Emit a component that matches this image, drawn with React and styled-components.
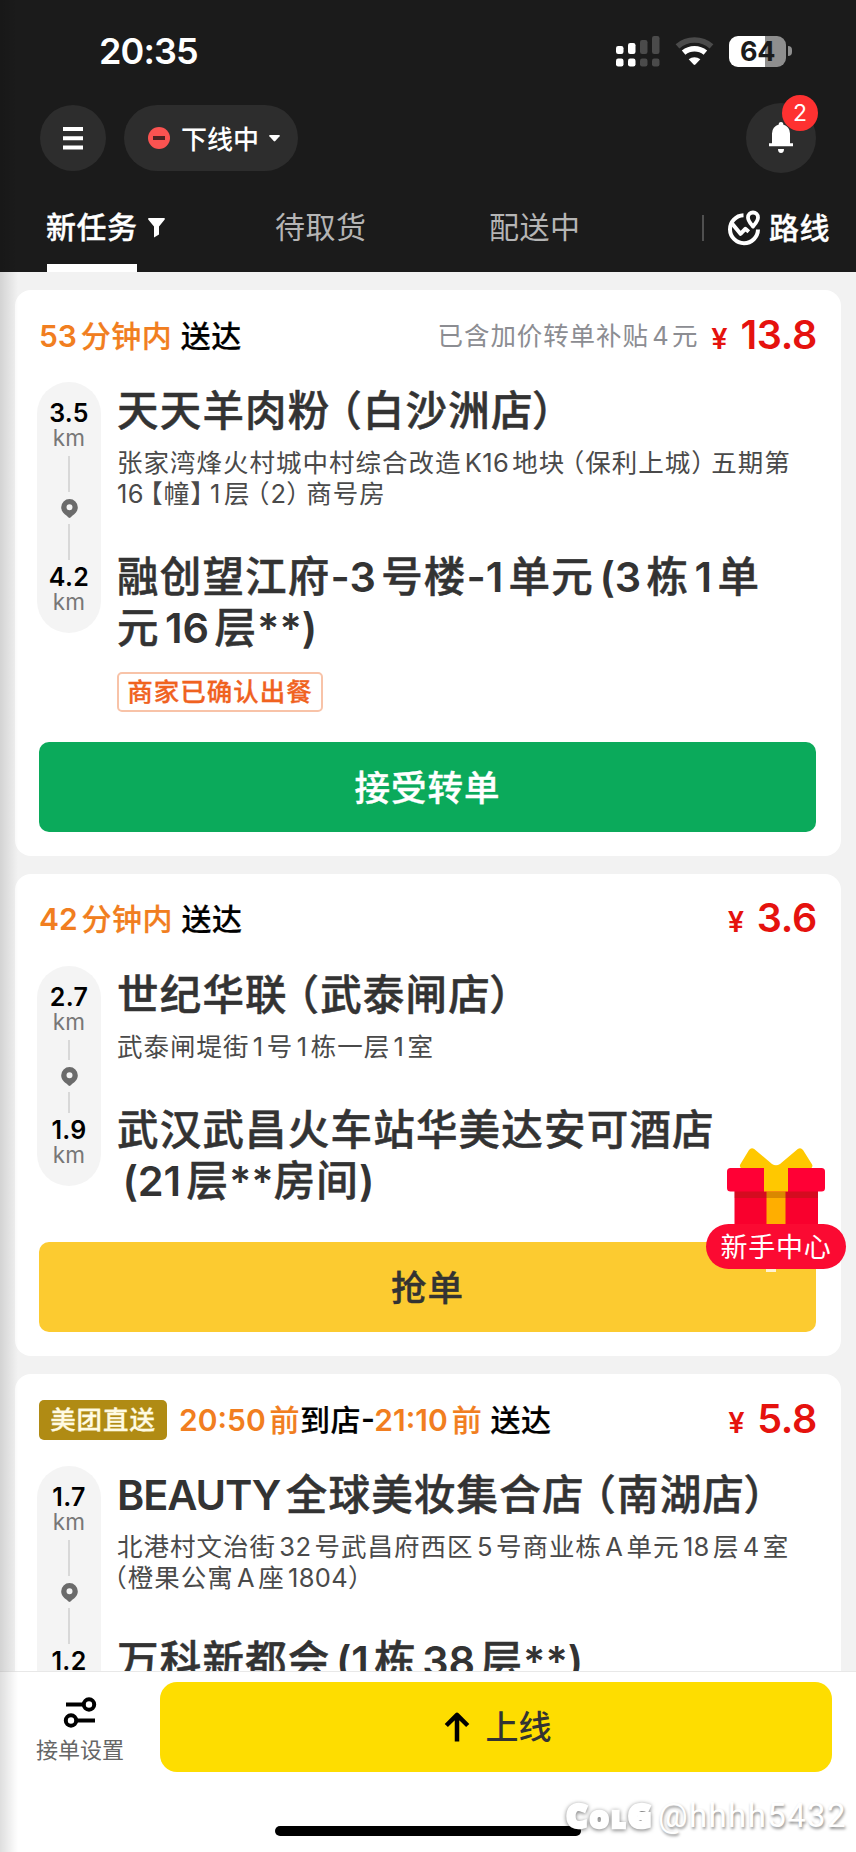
import styled, { createGlobalStyle, css } from "styled-components"

const GlobalStyle = createGlobalStyle`
    * { box-sizing: border-box; }
    body {
        margin: 0;
        background: #f2f2f2;
        font-family: Inter, "Noto Sans CJK SC", sans-serif;
    }
    p, h2, h3 { margin: 0; font-weight: inherit; }
    button { border: 0; padding: 0; font-family: inherit; }
    svg { display: block; flex: none; }
`

const orders = [
    {
        id: 1,
        time: [["53分钟内", true], [" 送达", false]],
        subsidy: "已含加价转单补贴4元",
        price: "13.8",
        toShop: "3.5",
        toUser: "4.2",
        railHeight: 251,
        shop: "天天羊肉粉（白沙洲店）",
        address: ["张家湾烽火村城中村综合改造K16地块（保利上城）五期第", "16【幢】1层（2）商号房"],
        target: ["融创望江府-3号楼-1单元(3栋1单", "元16层**)"],
        tag: "商家已确认出餐",
        action: "接受转单",
        kind: "transfer",
    },
    {
        id: 2,
        time: [["42分钟内", true], [" 送达", false]],
        price: "3.6",
        toShop: "2.7",
        toUser: "1.9",
        railHeight: 220,
        shop: "世纪华联（武泰闸店）",
        address: ["武泰闸堤街1号1栋一层1室"],
        target: ["武汉武昌火车站华美达安可酒店", "(21层**房间)"],
        action: "抢单",
        kind: "grab",
    },
    {
        id: 3,
        badge: "美团直送",
        time: [["20:50前", true], ["到店-", false], ["21:10前", true], [" 送达", false]],
        price: "5.8",
        toShop: "1.7",
        toUser: "1.2",
        railHeight: 251,
        shop: "BEAUTY全球美妆集合店（南湖店）",
        address: ["北港村文治街32号武昌府西区5号商业栋A单元18层4室", "（橙果公寓A座1804）"],
        target: ["万科新都会(1栋38层**)"],
        action: "抢单",
        kind: "grab",
    },
]

const isHan = (ch) => /[\u4e00-\u9fff]/.test(ch || "")

// latin runs get a little air next to chinese characters
function Mixed({ text }) {
    const parts = text.split(/([!-~]+|[（【]|[）】])/)
    return parts.map((part, i) => {
        if (i % 2 === 0) return part
        if (/[（【]/.test(part)) return <OpenParen key={i} $start={i === 1 && !parts[0]}>{part}</OpenParen>
        if (/[）】]/.test(part)) return <CloseParen key={i}>{part}</CloseParen>
        const before = part[0] === "(" || (/^\w/.test(part) && isHan(parts[i - 1].slice(-1)))
        const after = /\w$/.test(part) && isHan(parts[i + 1][0])
        return <Latin key={i} $before={before} $after={after} $caps={part.length > 4 && /^[A-Z]+$/.test(part)}>{part}</Latin>
    })
}

function Rail({ from, to, height }) {
    return (
        <RailBox $height={height}>
            <Distance>{from}</Distance>
            <Unit>km</Unit>
            <RailLine $above />
            <svg width="17" height="19" viewBox="0 0 17 19">
                <path fillRule="evenodd" fill="#6b6b6b" d="M8.5 0a8.3 8.3 0 0 1 8.3 8.3c0 4-2.600 6.600-5.500 8.500l-1.800 1.700a1.500 1.500 0 0 1-2 0L5.700 16.800C2.800 14.900.2 12.300.2 8.300A8.300 8.300 0 0 1 8.500 0Zm0 5.200a3 3 0 1 0 0 6 3 3 0 0 0 0-6Z" />
            </svg>
            <RailLine />
            <Distance $last>{to}</Distance>
            <Unit>km</Unit>
        </RailBox>
    )
}

function OrderCard({ order }) {
    return (
        <Card>
            <CardHeader>
                {order.badge && <Badge>{order.badge}</Badge>}
                <Time>
                    {order.time.map(([text, hot], i) => (
                        <TimePart key={i} $hot={hot}><Mixed text={text} /></TimePart>
                    ))}
                </Time>
                {order.subsidy && <Subsidy><Mixed text={order.subsidy} /></Subsidy>}
                <Price><Yen>¥</Yen>{order.price}</Price>
            </CardHeader>
            <CardBody>
                <Rail from={order.toShop} to={order.toUser} height={order.railHeight} />
                <Places>
                    <PlaceName><Mixed text={order.shop} /></PlaceName>
                    <Address>
                        {order.address.map((line) => <p key={line}><Mixed text={line} /></p>)}
                    </Address>
                    <PlaceName>
                        {order.target.map((line) => <div key={line}><Mixed text={line} /></div>)}
                    </PlaceName>
                    {order.tag && <OutlineTag>{order.tag}</OutlineTag>}
                </Places>
            </CardBody>
            <Action $kind={order.kind}>{order.action}</Action>
        </Card>
    )
}

function StatusIcons() {
    return (
        <StatusRight>
            <svg width="44" height="31" viewBox="0 0 44 31">
                <g fill="#fff">
                    <rect x="0" y="10" width="7.500" height="8" rx="2.200" />
                    <rect x="12" y="7" width="7.500" height="11" rx="2.200" />
                    <rect x="0" y="22.500" width="7.500" height="8" rx="2.200" />
                    <rect x="12" y="22.500" width="7.500" height="8" rx="2.200" />
                </g>
                <g fill="#4b4b4b">
                    <rect x="24" y="4" width="7.500" height="14" rx="2.200" />
                    <rect x="36" y="0" width="7.500" height="18" rx="2.200" />
                    <rect x="24" y="22.500" width="7.500" height="8" rx="2.200" />
                    <rect x="36" y="22.500" width="7.500" height="8" rx="2.200" />
                </g>
            </svg>
            <svg width="39" height="29" viewBox="0 0 39 29">
                <path d="M2.500 9.300C12 .9 27 .9 36.500 9.300" stroke="#4b4b4b" strokeWidth="5.600" fill="none" />
                <path d="M8.600 15.600c6.400-5.200 15.400-5.200 21.800 0" stroke="#fff" strokeWidth="5.600" fill="none" />
                <path d="M13.700 22.300c3.400-2.900 8.200-2.900 11.600 0l-4.900 5.200a1.300 1.300 0 0 1-1.800 0z" fill="#fff" />
            </svg>
            <Battery>
                <Cell>64</Cell>
                <Nub />
            </Battery>
        </StatusRight>
    )
}

export default function App() {
    return (
        <Phone>
            <GlobalStyle />
            <Header>
                <StatusBar>
                    <Clock>20:35</Clock>
                    <StatusIcons />
                </StatusBar>
                <Toolbar>
                    <RoundButton $size={66}>
                        <svg width="20" height="23" viewBox="0 0 20 23" fill="#fff">
                            <path d="M0 0h20v4H0zM0 9.300h20v4H0zM0 18.400h20v4H0z" />
                        </svg>
                    </RoundButton>
                    <OnlineSwitch>
                        <svg width="22" height="22" viewBox="0 0 22 22">
                            <circle cx="11" cy="11" r="11" fill="#fa5351" />
                            <rect x="5" y="9" width="12" height="4" fill="#4c2322" />
                        </svg>
                        <span>下线中</span>
                        <svg width="11" height="7" viewBox="0 0 11 7" fill="#fff">
                            <path d="M.8 0h9.400q1 .3.400 1.200L6.300 6q-.8.800-1.600 0L.4 1.200Q-.2.300.8 0z" />
                        </svg>
                    </OnlineSwitch>
                    <BellButton $size={70}>
                        <svg width="24" height="32" viewBox="0 0 24 32" fill="#fff">
                            <path d="M12 0a2.300 2.300 0 0 1 2.200 2.600A9 9 0 0 1 21 11.500v9.700h3v3H0v-3h3v-9.700a9 9 0 0 1 6.800-8.900A2.300 2.300 0 0 1 12 0Z" />
                            <path d="M9 27h6a3 4 0 0 1-6 0Z" />
                        </svg>
                        <Count>2</Count>
                    </BellButton>
                </Toolbar>
                <Tabs>
                    <Tab $active>新任务</Tab>
                    <Filter width="17" height="20" viewBox="0 0 17 20" fill="#fff">
                        <path d="M1 0h15q1.500.3.500 1.800L11 8.600v7.900l-5 3V8.600L.4 1.800Q-.5.300 1 0z" />
                    </Filter>
                    <Tab>待取货</Tab>
                    <Tab>配送中</Tab>
                    <RouteLink>
                        <svg width="33" height="36" viewBox="0 0 33 36" fill="none" stroke="#fff" strokeWidth="4">
                            <path d="M15.500 5.200A14 14 0 1 0 30 19.500" />
                            <path d="M4 13.500l8.500 10.300 4.800-5 3.500 3" strokeLinejoin="round" />
                            <path d="M25 16.500c-2.500-3.200-5-5.500-5-9a5 5 0 0 1 10 0c0 3.500-2.500 5.800-5 9z" strokeWidth="3.800" strokeLinejoin="round" />
                        </svg>
                        路线
                    </RouteLink>
                </Tabs>
            </Header>

            <List>
                {orders.map((order) => <OrderCard key={order.id} order={order} />)}
            </List>

            <BottomBar>
                <Settings>
                    <svg width="34" height="31" viewBox="0 0 34 31" fill="none" stroke="#000" strokeWidth="4">
                        <path d="M3 7.500h17M14 23.500h18" />
                        <circle cx="26" cy="7.500" r="5.200" />
                        <circle cx="8" cy="23.500" r="5.200" />
                    </svg>
                    接单设置
                </Settings>
                <GoOnline>
                    <svg width="26" height="30" viewBox="0 0 26 30" fill="none" stroke="#000" strokeWidth="4.500">
                        <path d="M13 29.500V3M2.300 13.500L13 2.800l10.700 10.700" strokeLinejoin="round" />
                    </svg>
                    <span>上线</span>
                </GoOnline>
            </BottomBar>

            <HomeIndicator />

            <Newbie>
                <svg width="98" height="76" viewBox="0 0 98 76">
                    <path d="M30 21H15.500q-4-1.500-2-5L22 2q2.300-3 5.200-1L45 16q4 2.500 8 0L70.800 1q2.900-2 5.200 1l8.800 14q2 3.500-2 5z" fill="#ffc800" />
                    <rect x="7.500" y="40" width="83.500" height="36" fill="#f9002d" />
                    <rect x="39.500" y="40" width="19" height="36" fill="#ffae00" />
                    <rect x="7.500" y="43" width="83.500" height="7" fill="#7a2800" opacity=".28" />
                    <rect x="0" y="20" width="98" height="23.500" rx="3.500" fill="#ff0035" />
                    <rect x="37" y="19" width="24" height="24.500" fill="#ffc800" />
                </svg>
                <NewbieLabel>新手中心</NewbieLabel>
                <NewbieTick />
            </Newbie>

            <Watermark>
                <WatermarkLogo><b>C</b>OL<b>G</b></WatermarkLogo>
                @hhhh5432
            </Watermark>
            <EdgeShade />
        </Phone>
    )
}

const Phone = styled.div`
    position: relative;
    display: flex;
    flex-direction: column;
    width: 856px;
    height: 1852px;
    overflow: hidden;
    background: #f2f2f2;
    white-space: nowrap;
`

const Header = styled.header`
    flex: none;
    height: 272px;
    display: flex;
    flex-direction: column;
    background: #1b1b1b;
    color: #fff;
`

const StatusBar = styled.div`
    display: flex;
    justify-content: space-between;
    align-items: center;
    height: 103px;
    padding: 0 64px 1px 99px;
`

const Clock = styled.span`
    font-size: 36px;
    font-weight: 600;
    letter-spacing: -0.9px;
`

const StatusRight = styled.div`
    display: flex;
    align-items: center;
    gap: 15px;
`

const Battery = styled.div`
    display: flex;
    align-items: center;
    gap: 2px;
`

const Cell = styled.div`
    width: 57px;
    height: 31px;
    border-radius: 9px;
    background: linear-gradient(90deg, #fff 64%, #8e8e8e 64%);
    color: #1b1b1b;
    font-size: 27px;
    font-weight: 700;
    line-height: 31px;
    text-align: center;
    letter-spacing: -0.5px;
`

const Nub = styled.div`
    width: 4px;
    height: 10px;
    border-radius: 0 5px 5px 0;
    background: #8e8e8e;
`

const Toolbar = styled.div`
    display: flex;
    align-items: center;
    height: 70px;
    padding: 0 40px;
`

const RoundButton = styled.button`
    display: flex;
    align-items: center;
    justify-content: center;
    width: ${(p) => p.$size}px;
    height: ${(p) => p.$size}px;
    border-radius: 50%;
    background: #2d2d2d;
`

const BellButton = styled(RoundButton)`
    position: relative;
    margin-left: auto;
`

const Count = styled.span`
    position: absolute;
    top: -8px;
    right: -2px;
    width: 36px;
    height: 36px;
    border-radius: 50%;
    background: #fe3131;
    color: #fff;
    font-size: 23px;
    line-height: 36px;
`

const OnlineSwitch = styled.button`
    display: flex;
    align-items: center;
    width: 174px;
    height: 66px;
    margin-left: 18px;
    padding-left: 24px;
    border-radius: 33px;
    background: #2d2d2d;
    color: #fff;
    font-size: 26px;
    font-weight: 500;

    span {
        margin: 0 10px 2px 11px;
    }
`

const Tabs = styled.nav`
    flex: 1;
    display: flex;
    align-items: stretch;
    padding: 10px 26px 0 46px;
    font-size: 30px;
    letter-spacing: 0.5px;
    line-height: 88px;
`

const Tab = styled.div`
    position: relative;
    width: 91px;
    color: #b5b5b5;
    font-weight: 400;

    & + & {
        margin-left: 123px;
    }

    ${(p) => p.$active && css`
        color: #fff;
        font-weight: 500;
        -webkit-text-stroke: 0.3px;

        &::after {
            content: "";
            position: absolute;
            left: 1px;
            bottom: 0;
            width: 90px;
            height: 8px;
            background: #fff;
        }
    `}
`

const Filter = styled.svg`
    margin: 35px 110px 0 11px;
`

const RouteLink = styled.div`
    display: flex;
    align-items: center;
    gap: 8px;
    margin-left: auto;
    font-weight: 500;
    -webkit-text-stroke: 0.3px;

    &::before {
        content: "";
        width: 2px;
        height: 26px;
        margin-right: 16px;
        background: #505050;
    }
`

const List = styled.main`
    flex: 1;
    min-height: 0;
    overflow: hidden;
    display: flex;
    flex-direction: column;
    gap: 18px;
    padding: 18px 15px 0;
`

const Card = styled.article`
    flex: none;
    border-radius: 16px;
    background: #fff;
    padding: 0 24px 24px;
`

const CardHeader = styled.div`
    display: flex;
    align-items: center;
    height: 92px;
`

const Badge = styled.span`
    width: 128px;
    height: 40px;
    margin-right: 12px;
    border-radius: 5px;
    background: #b08b14;
    color: #fffbe3;
    font-size: 25.500px;
    font-weight: 500;
    line-height: 39px;
    letter-spacing: 0.9px;
    text-align: center;
    -webkit-text-stroke: 0.3px;
`

const Time = styled.h2`
    padding-bottom: 5px;
    font-size: 30px;
    font-weight: 500;
    letter-spacing: 0.5px;
    -webkit-text-stroke: 0.2px;
`

const TimePart = styled.span`
    color: ${(p) => (p.$hot ? "#f17e20" : "#000")};
`

const Subsidy = styled.span`
    margin-left: auto;
    padding-bottom: 5px;
    color: #8c8d92;
    font-size: 25.500px;
    font-weight: 400;
    letter-spacing: 0.9px;
`

const Price = styled.span`
    padding-bottom: 3px;
    color: #e5120e;
    font-size: 39.500px;
    font-weight: 600;
    letter-spacing: -0.3px;

    ${Time} + & {
        margin-left: auto;
    }
`

const Yen = styled.span`
    margin: 0 13px 0 13px;
    font-size: 29px;
`

const CardBody = styled.div`
    display: flex;
    align-items: flex-start;
`

const RailBox = styled.div`
    flex: none;
    display: flex;
    flex-direction: column;
    align-items: center;
    width: 64px;
    height: ${(p) => p.$height}px;
    margin-left: -2px;
    padding: 18px 0 20px;
    border-radius: 32px;
    background: #f4f4f4;
`

const Distance = styled.span`
    margin-top: ${(p) => (p.$last ? 4 : 0)}px;
    color: #000;
    font-size: 25px;
    font-weight: 600;
    line-height: 26px;
    letter-spacing: 0.3px;
`

const Unit = styled.span`
    color: #777;
    font-size: 22.500px;
    line-height: 23px;
    letter-spacing: 0.3px;
`

const RailLine = styled.i`
    flex: 1;
    width: 2px;
    margin: ${(p) => (p.$above ? "7px 0 7px" : "6px 0 0")};
    background: #d8d8d8;
`

const Places = styled.div`
    padding: 4px 0 0 16px;
`

const PlaceName = styled.h3`
    color: #333;
    font-size: 41.500px;
    font-weight: 500;
    line-height: 51.400px;
    letter-spacing: 1.2px;
    -webkit-text-stroke: 0.5px;
`

const Address = styled.div`
    margin: 10.500px 0 42.300px;
    color: #4a4a4a;
    font-size: 25.500px;
    font-weight: 400;
    line-height: 30.800px;
    letter-spacing: 1px;
`

const Latin = styled.span`
    margin: 0 ${(p) => (p.$after ? "0.13em" : 0)} 0 ${(p) => (p.$before ? "0.13em" : 0)};
    letter-spacing: 0;

    ${PlaceName} & {
        font-weight: 600;
        letter-spacing: ${(p) => (p.$caps ? "-1.1px" : "-0.1px")};
        -webkit-text-stroke: 0;
    }

    ${Time} & {
        font-weight: 600;
        letter-spacing: 0;
        -webkit-text-stroke: 0;
    }

    ${Address} & {
        letter-spacing: 0.3px;
    }
`

const OpenParen = styled.span`
    ${PlaceName} & { margin-left: -0.25em; }
    ${Address} & { margin-left: ${(p) => (p.$start ? -0.62 : -0.26)}em; }
`

const CloseParen = styled.span`
    ${PlaceName} & { margin-left: -0.04em; }
    ${Address} & { margin-right: -0.26em; }
`

const OutlineTag = styled.span`
    display: block;
    width: 206px;
    height: 40px;
    margin-top: 17px;
    border: 2px solid #f8c3a8;
    border-radius: 5px;
    color: #f0621f;
    font-size: 25.500px;
    font-weight: 500;
    line-height: 35px;
    letter-spacing: 1px;
    text-align: center;
    -webkit-text-stroke: 0.3px;
`

const Action = styled.button`
    display: block;
    width: 777px;
    height: 90px;
    margin-top: ${(p) => (p.$kind === "transfer" ? 30 : 35)}px;
    padding-bottom: 3px;
    border-radius: 10px;
    background: ${(p) => (p.$kind === "transfer" ? "#0baa5b" : "#fccb30")};
    color: ${(p) => (p.$kind === "transfer" ? "#fff" : "#333")};
    font-size: 35.500px;
    font-weight: 500;
    letter-spacing: 1px;
    -webkit-text-stroke: 0.4px;
`

const BottomBar = styled.footer`
    flex: none;
    display: flex;
    height: 155px;
    padding-top: 10px;
    border-top: 1px solid #e8e8e8;
    background: #fff;
`

const Settings = styled.div`
    display: flex;
    flex-direction: column;
    align-items: center;
    width: 160px;
    padding-top: 15px;
    color: #666;
    font-size: 22px;
    font-weight: 400;
    line-height: 45px;
`

const GoOnline = styled.button`
    display: flex;
    align-items: center;
    justify-content: center;
    gap: 16px;
    width: 672px;
    height: 90px;
    padding-left: 3px;
    border-radius: 17px;
    background: #fedd00;
    color: #333;
    font-size: 33px;
    font-weight: 500;

    span {
        margin-bottom: 4px;
    }
`

const HomeIndicator = styled.div`
    flex: none;
    height: 26px;
    background: #fff;

    &::before {
        content: "";
        display: block;
        width: 306px;
        height: 10px;
        margin: 0 auto;
        border-radius: 5px;
        background: #000;
    }
`

const Newbie = styled.div`
    position: absolute;
    right: 10px;
    top: 1148px;
    display: flex;
    flex-direction: column;
    align-items: center;
`

const NewbieLabel = styled.span`
    width: 140px;
    height: 45px;
    padding-top: 1px;
    border-radius: 23px;
    background: #fb0a32;
    color: #fff;
    font-size: 27px;
    font-weight: 400;
    line-height: 45px;
    letter-spacing: 0.8px;
    text-align: center;
`

const NewbieTick = styled.i`
    width: 10px;
    height: 3px;
    margin-right: 10px;
    background: #fff3d0;
`

const Watermark = styled.div`
    position: absolute;
    right: 9px;
    bottom: 16px;
    display: flex;
    align-items: center;
    color: #fff;
    font-family: Roboto, sans-serif;
    font-size: 33px;
    line-height: 40px;
    letter-spacing: 1.4px;
    text-shadow: 1px 2px 3px rgba(0, 0, 0, 0.45);
`

const WatermarkLogo = styled.span`
    margin-right: 3px;
    font-family: "Open Sans", sans-serif;
    font-size: 22px;
    font-weight: 700;
    line-height: 32px;
    letter-spacing: 4px;
    text-shadow: none;
    filter: drop-shadow(0 1px 2px rgba(0, 0, 0, 0.55));
    -webkit-text-stroke: 4.500px #fff;

    b {
        font-size: 31px;
        font-weight: 700;
    }
`

const EdgeShade = styled.div`
    position: absolute;
    inset: 0 auto 0 0;
    width: 18px;
    background: linear-gradient(90deg, rgba(0, 0, 0, 0.13), transparent);
    pointer-events: none;
`
